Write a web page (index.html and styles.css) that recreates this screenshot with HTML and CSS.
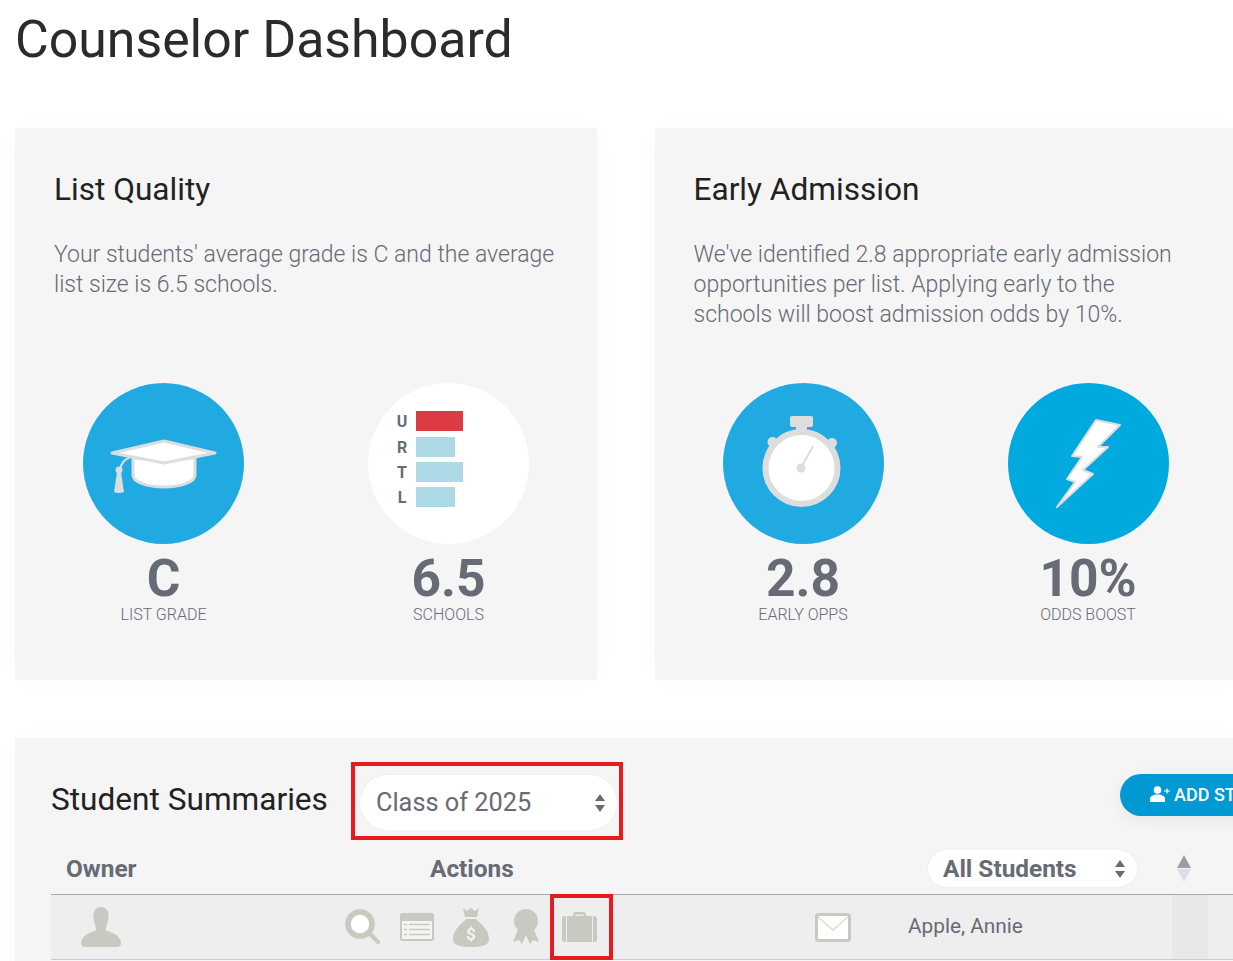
FILE: index.html
```html
<!DOCTYPE html>
<html lang="en">

<head>
    <meta charset="UTF-8">
    <meta name="viewport" content="width=device-width, initial-scale=1.0">
    <title>Counselor Dashboard</title>
    <link rel="stylesheet" href="styles.css">
</head>

<body>
    <h1 class="page-title">Counselor Dashboard</h1>

    <div class="cards">
        <div class="card">
            <h2>List Quality</h2>
            <p class="card-text">Your students' average grade is C and the average list size is 6.5 schools.</p>
            <div class="stats">
                <div class="stat">
                    <div class="circle circle-blue">
                        <svg viewBox="0 0 161 161">
                            <path d="M50 75V92C50 99 64 104 81 104S112 99 112 92V75Z" fill="#fff" stroke="#ddd" stroke-width="3" />
                            <path d="M29 70L81 58L132 70L81 80Z" fill="#fff" stroke="#ddd" stroke-width="3" stroke-linejoin="round" />
                            <path d="M48 74C41 76 38 80 37 87" fill="none" stroke="#ddd" stroke-width="2" />
                            <circle cx="36" cy="87" r="3.5" fill="#ddd" />
                            <path d="M34 89H38L41 109Q36 111 31 109Z" fill="#ddd" />
                        </svg>
                    </div>
                    <div class="stat-value">C</div>
                    <div class="stat-label">LIST GRADE</div>
                </div>
                <div class="stat">
                    <div class="circle circle-white">
                        <div class="bars">
                            <div class="bar-row"><b>U</b><span class="bar bar-full bar-red"></span></div>
                            <div class="bar-row"><b>R</b><span class="bar bar-short"></span></div>
                            <div class="bar-row"><b>T</b><span class="bar bar-full"></span></div>
                            <div class="bar-row"><b>L</b><span class="bar bar-short"></span></div>
                        </div>
                    </div>
                    <div class="stat-value">6.5</div>
                    <div class="stat-label">SCHOOLS</div>
                </div>
            </div>
        </div>

        <div class="card">
            <h2>Early Admission</h2>
            <p class="card-text">We've identified 2.8 appropriate early admission opportunities per list. Applying early to the schools will boost admission odds by 10%.</p>
            <div class="stats">
                <div class="stat">
                    <div class="circle circle-blue">
                        <svg viewBox="0 0 161 161">
                            <rect x="67" y="33" width="23" height="11" rx="2" fill="#ddd" />
                            <rect x="73" y="42" width="11" height="8" fill="#ddd" />
                            <circle cx="49.500" cy="59" r="5" fill="#ddd" />
                            <circle cx="109" cy="60" r="5" fill="#ddd" />
                            <circle cx="78.500" cy="85" r="36" fill="#fff" stroke="#ddd" stroke-width="6" />
                            <path d="M78 85L90 63" stroke="#ddd" stroke-width="2" />
                            <circle cx="78" cy="85" r="4.500" fill="#ddd" />
                        </svg>
                    </div>
                    <div class="stat-value">2.8</div>
                    <div class="stat-label">EARLY OPPS</div>
                </div>
                <div class="stat">
                    <div class="circle circle-cyan">
                        <svg viewBox="0 0 161 161">
                            <path d="M88 37L112 42L90 64L100 64L75 87L85 91L49 124L67 99L59 96L74 74L64 73Z" fill="#fff" stroke="#ddd" stroke-width="2" stroke-linejoin="round" />
                        </svg>
                    </div>
                    <div class="stat-value">10%</div>
                    <div class="stat-label">ODDS BOOST</div>
                </div>
            </div>
        </div>
    </div>

    <div class="summaries">
        <div class="summaries-top">
            <h2>Student Summaries</h2>
            <div class="highlight-box">
                <div class="pill pill-class">Class of 2025<span class="updown"></span></div>
            </div>
            <button class="add-button">
                <svg viewBox="0 0 20 16" width="20" height="16">
                    <circle cx="7.500" cy="4" r="3.800" fill="#fff" />
                    <path d="M0 16V13C0 10 3 8.500 7.500 8.500S15 10 15 13V16Z" fill="#fff" />
                    <path d="M14 5H20M17 2.500V7.500" stroke="#fff" stroke-width="1.200" />
                </svg>
                ADD STUDENT
            </button>
        </div>

        <div class="table-head">
            <div class="head-owner">Owner</div>
            <div class="head-actions">Actions</div>
            <div class="pill pill-filter">All Students<span class="updown"></span></div>
            <div class="sort"><span class="sort-up"></span><span class="sort-down"></span></div>
        </div>

        <div class="table-row">
            <div class="cell-owner">
                <svg viewBox="0 0 40 40" width="40" height="40">
                    <path d="M20 0C14 0 12 5 12.500 11C13 16 15 20 15.500 23C10 26 1 27 0 36Q0 40 4 40H36Q40 40 40 36C39 27 30 26 24.500 23C25 20 27 16 27.500 11C28 5 26 0 20 0Z" fill="#c9c8c1" />
                </svg>
            </div>
            <div class="cell-actions">
                <svg class="icon-search" viewBox="0 0 36 36" width="36" height="36">
                    <circle cx="15" cy="15" r="12" fill="#fff" stroke="#c9c8c1" stroke-width="5.500" />
                    <path d="M24 24L33 33" stroke="#c9c8c1" stroke-width="4" stroke-linecap="round" />
                </svg>
                <svg class="icon-list" viewBox="0 0 34 28" width="34" height="28">
                    <rect width="34" height="28" rx="2" fill="#c9c8c1" />
                    <rect x="2" y="8" width="30" height="18" fill="#f4f4f1" />
                    <path d="M9 11.500H30M9 16.500H30M9 21.500H30M4 11.500H7M4 16.500H7M4 21.500H7" stroke="#c9c8c1" stroke-width="1.500" />
                </svg>
                <svg class="icon-bag" viewBox="0 0 36 39" width="36" height="39">
                    <path d="M10 0L14 3L18 0L22 3L26 0L24 9H12Z" fill="#c9c8c1" />
                    <path d="M13 11H23C28 16 36 22 36 31C36 37 30 39 18 39S0 37 0 31C0 22 8 16 13 11Z" fill="#c9c8c1" />
                    <text x="18" y="32" class="bag-sign">$</text>
                </svg>
                <svg class="icon-ribbon" viewBox="0 0 26 36" width="26" height="36">
                    <path d="M6 18L0 33L6 31L9 35L13 26L17 35L20 31L26 33L20 18Z" fill="#c9c8c1" />
                    <circle cx="13" cy="12" r="12" fill="#c9c8c1" />
                </svg>
                <span class="case-wrap">
                    <svg viewBox="0 0 35 30" width="35" height="30">
                        <path d="M11 5V3Q11 0 14 0H21Q24 0 24 3V5H21.500V2.500H13.500V5Z" fill="#c9c8c1" />
                        <rect x="5" y="4" width="25" height="26" fill="#c9c8c1" />
                        <path d="M4 4V30H3Q0 30 0 27V7Q0 4 3 4ZM31 4H32Q35 4 35 7V27Q35 30 32 30H31Z" fill="#c9c8c1" />
                    </svg>
                    <span class="case-mark"></span>
                </span>
            </div>
            <div class="cell-mail">
                <svg viewBox="0 0 36 29" width="36" height="29">
                    <rect x="1.500" y="1.500" width="33" height="26" rx="2" fill="#fff" stroke="#c9c8c1" stroke-width="3" />
                    <path d="M3 4L18 17L33 4" fill="none" stroke="#dcdbd5" stroke-width="1.500" />
                </svg>
            </div>
            <div class="cell-name">Apple, Annie</div>
            <div class="cell-scroll"></div>
        </div>
    </div>
</body>

</html>
```

FILE: styles.css
```css
body {
    font-family: Roboto, "Liberation Sans", sans-serif;
    margin: 0;
    background-color: #fff;
    overflow: hidden;
}

.page-title {
    margin: 0;
    padding: 9px 0 0 15px;
    height: 128px;
    box-sizing: border-box;
    font-size: 51.8px;
    line-height: 62px;
    font-weight: 400;
    color: #2b2b2b;
}

.cards {
    display: flex;
    gap: 57.5px;
    margin-left: 15px;
    width: 1222px;
}

.card {
    width: 582px;
    height: 552px;
    flex-shrink: 0;
    box-sizing: border-box;
    padding-top: 43px;
    background-color: #f5f5f5;
    box-shadow: 0 0 30px rgba(0, 0, 0, 0.02);
}

.card h2 {
    margin: 0 0 31px 39px;
    font-size: 31.6px;
    line-height: 38px;
    font-weight: 400;
    color: #222;
}

.card-text {
    margin: 0 39px;
    height: 90px;
    font-size: 23px;
    line-height: 30px;
    font-weight: 300;
    color: #666b75;
}

.stats {
    display: grid;
    grid-template-columns: 285px 285px;
    padding: 53px 6px 0;
}

.stat {
    display: flex;
    flex-direction: column;
    align-items: center;
}

.circle {
    width: 161px;
    height: 161px;
    border-radius: 50%;
}

.circle svg {
    display: block;
}

.circle-blue {
    background-color: #21a9e1;
}

.circle-cyan {
    background-color: #00a9de;
}

.circle-white {
    background-color: #fff;
}

.stat-value {
    margin-top: 9px;
    font-size: 51.5px;
    line-height: 52px;
    font-weight: 700;
    color: #666b75;
}

.stat-label {
    font-size: 16px;
    line-height: 20px;
    font-weight: 300;
    color: #666b75;
}

.bars {
    display: flex;
    flex-direction: column;
    gap: 5px;
    padding: 28px 0 0 24px;
}

.bar-row {
    display: flex;
    align-items: center;
    height: 20px;
}

.bar-row:first-child {
    margin-bottom: 1px;
}

.bar-row b {
    width: 20px;
    margin-right: 4px;
    text-align: center;
    font-size: 16px;
    color: #666b75;
}

.bar {
    display: block;
    height: 20px;
    background-color: #add8e6;
}

.bar-full {
    width: 47px;
}

.bar-short {
    width: 39px;
}

.bar-red {
    background-color: #da3c42;
}

.summaries {
    width: 1222px;
    box-sizing: border-box;
    margin: 58px 0 0 15px;
    padding: 24px 0 0 36px;
    height: 300px;
    background-color: #f5f5f5;
    box-shadow: 0 0 30px rgba(0, 0, 0, 0.02);
}

.summaries-top {
    display: flex;
    align-items: flex-start;
}

.summaries-top h2 {
    flex-shrink: 0;
    width: 277px;
    margin: 19px 23px 0 0;
    font-size: 31.6px;
    line-height: 38px;
    font-weight: 400;
    white-space: nowrap;
    color: #222;
}

.highlight-box {
    flex-shrink: 0;
    box-sizing: border-box;
    width: 272px;
    height: 78px;
    padding: 9px 5px 0;
    border: 4px solid #e8191f;
}

.pill {
    position: relative;
    box-sizing: border-box;
    background-color: #fff;
    color: #666b75;
    border-radius: 30px;
    box-shadow: 0 0 2px rgba(0, 0, 0, 0.08);
}

.pill-class {
    width: 257px;
    height: 55px;
    padding-left: 16px;
    font-size: 25.3px;
    line-height: 55px;
}

.pill-filter {
    flex-shrink: 0;
    width: 209px;
    height: 37px;
    padding-left: 15px;
    font-size: 24.4px;
    font-weight: 700;
    line-height: 37px;
}

.updown {
    position: absolute;
    right: 12px;
    top: 50%;
    margin-top: -9px;
    width: 10px;
    height: 18px;
}

.updown::before,
.updown::after {
    content: "";
    position: absolute;
    left: 0;
    border-left: 5px solid transparent;
    border-right: 5px solid transparent;
}

.updown::before {
    top: 0;
    border-bottom: 7px solid #666b75;
}

.updown::after {
    bottom: 0;
    border-top: 7px solid #666b75;
}

.add-button {
    display: flex;
    align-items: center;
    gap: 4px;
    flex-shrink: 0;
    margin: 12px 0 0 497px;
    padding: 0 30px 2px;
    height: 42px;
    border: 0;
    border-radius: 21px;
    background-color: #0099d4;
    color: #fff;
    font-family: inherit;
    font-size: 18px;
    font-weight: 500;
    white-space: nowrap;
    box-shadow: 0 4px 18px rgba(0, 0, 0, 0.06);
}

.table-head {
    display: flex;
    align-items: center;
    height: 44px;
    box-sizing: border-box;
    margin-top: 11px;
    padding: 0 0 8px 15px;
    border-bottom: 1px solid #aaa;
    font-size: 24.4px;
    font-weight: 700;
    color: #666b75;
}

.head-owner {
    width: 364px;
}

.head-actions {
    width: 498px;
}

.sort {
    display: flex;
    flex-direction: column;
    gap: 1px;
    margin-left: 40px;
}

.sort-up,
.sort-down {
    display: block;
    border-left: 7px solid transparent;
    border-right: 7px solid transparent;
}

.sort-up {
    border-bottom: 13px solid #9a9ea6;
}

.sort-down {
    border-top: 13px solid #dcdee2;
}

.table-row {
    display: grid;
    grid-template-columns: 294px 470px 93px 264px 36px;
    align-items: center;
    height: 65px;
    box-sizing: border-box;
    background-color: #eee;
    border-bottom: 1px solid #ccc;
}

.table-row svg {
    display: block;
    filter: blur(0.4px);
}

.cell-owner {
    padding-left: 30px;
}

.cell-actions {
    display: flex;
    align-items: center;
}

.icon-search {
    margin-right: 19px;
}

.icon-list {
    margin-right: 19px;
}

.icon-bag {
    margin-right: 24px;
}

.icon-ribbon {
    margin-right: 23px;
}

.bag-sign {
    font-size: 17px;
    font-weight: 700;
    fill: #f4f4f1;
    text-anchor: middle;
}

.case-wrap {
    position: relative;
}

.case-mark {
    position: absolute;
    left: -12px;
    top: -18px;
    width: 63px;
    height: 66px;
    box-sizing: border-box;
    border: 4px solid #e8191f;
}

.cell-name {
    padding-bottom: 2px;
    font-size: 20.8px;
    color: #666b75;
}

.cell-scroll {
    align-self: stretch;
    background-color: #e8e8e8;
}
```
